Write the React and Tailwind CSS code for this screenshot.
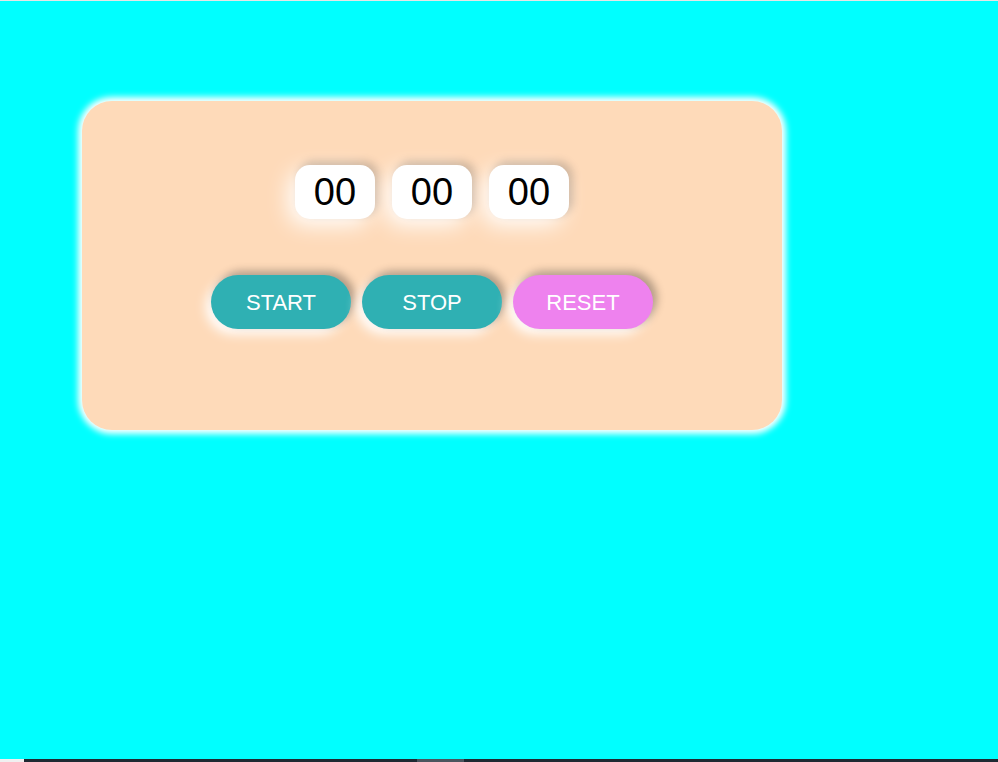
import { useState } from "react";

function TimeBox({ value }) {
    return (
        <div className="w-[80px] h-[54px] rounded-[15px] bg-white flex items-center justify-center text-[38px] text-black leading-none shadow-[4px_-4px_8px_rgba(0,0,0,0.18),-6px_6px_22px_#ffffff]">
            {value}
        </div>
    );
}

export default function App() {
    const [time] = useState({ h: "00", m: "00", s: "00" });

    const btn = "w-[140px] h-[54px] rounded-full text-white text-[22px] flex items-center justify-center shadow-[4px_-4px_8px_rgba(0,0,0,0.3),-5px_5px_12px_#ffffff]";

    return (
        <div className="h-[762px] w-full flex flex-col overflow-hidden bg-[#00ffff] font-['Liberation_Sans',Arial,sans-serif] border-t border-[#e6e6e6]">
            <div className="flex-1 pl-[82px] pt-[100px]">
                {/* timer card */}
                <div className="w-[700px] h-[329px] rounded-[30px] bg-[#fedab9] shadow-[0_0_6px_4px_#ffffff] flex flex-col items-center pt-[64px]">
                    <div className="flex gap-[17px]">
                        <TimeBox value={time.h} />
                        <TimeBox value={time.m} />
                        <TimeBox value={time.s} />
                    </div>
                    <div className="flex gap-[11px] mt-[56px]">
                        <button className={`${btn} bg-[#2fb0b3]`}>START</button>
                        <button className={`${btn} bg-[#2fb0b3]`}>STOP</button>
                        <button className={`${btn} bg-[#ee82ee]`}>RESET</button>
                    </div>
                </div>
            </div>
            {/* bottom scroll strip */}
            <div className="h-[3px] flex">
                <div className="w-[24px] bg-[#f0f0f0]" />
                <div className="w-[393px] bg-[#1e2a33]" />
                <div className="w-[47px] bg-[#4b565f]" />
                <div className="flex-1 bg-[#1e2a33]" />
            </div>
        </div>
    );
}
